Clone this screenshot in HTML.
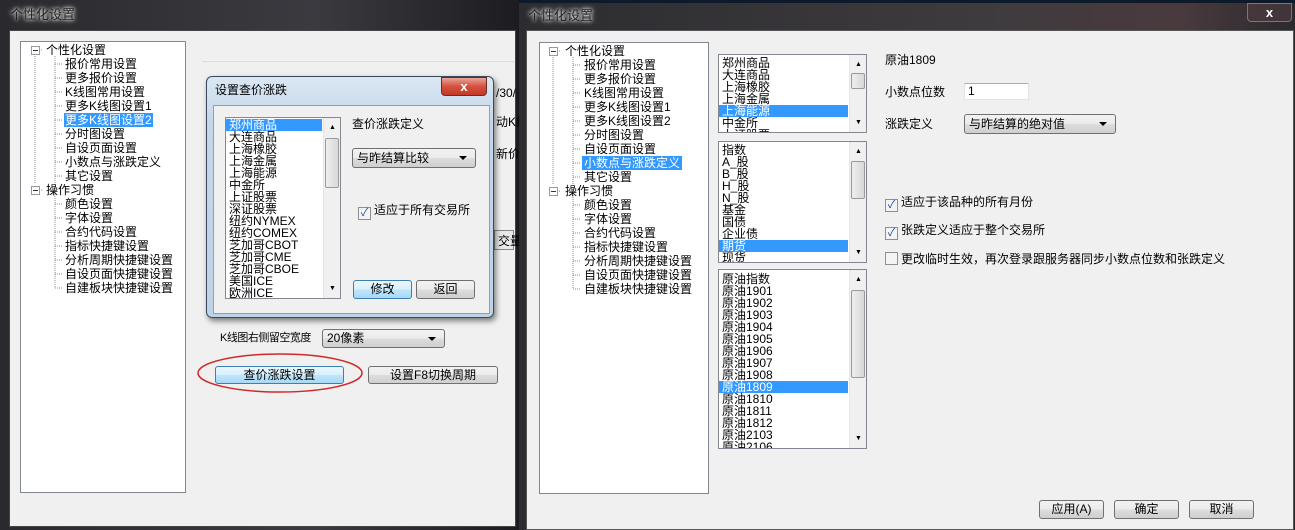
<!DOCTYPE html>
<html><head><meta charset="utf-8"><style>
*{margin:0;padding:0;box-sizing:border-box}
body{width:1295px;height:530px;overflow:hidden;background:#1a1a1c;font-family:"Liberation Sans","Noto Sans CJK SC","WenQuanYi Zen Hei",sans-serif;font-size:12px;color:#000;position:relative}
.a{position:absolute}
.t{position:absolute;white-space:nowrap;line-height:14px}
.box{position:absolute;background:#fff;border:1px solid #828790}
.btn{position:absolute;border:1px solid #707070;border-radius:3px;background:linear-gradient(#f2f2f2,#ebebeb 50%,#dddddd 51%,#cfcfcf);text-align:center;font-size:12px}
.combo{position:absolute;border:1px solid #707070;border-radius:3px;background:linear-gradient(#f2f2f2,#ebebeb 50%,#dddddd 51%,#cfcfcf);font-size:12px;padding-left:4px}
.combo:after{content:"";position:absolute;right:8px;top:50%;margin-top:-2px;border-left:4px solid transparent;border-right:4px solid transparent;border-top:4px solid #000}
.sb{position:absolute;top:0;right:0;bottom:0;width:17px;background:#f0f0f0;border-left:1px solid #e6e6e6}
.thumb{position:absolute;left:1px;right:1px;border:1px solid #9a9a9a;border-radius:2px;background:linear-gradient(90deg,#eee,#d8d8d8)}
.sel{background:#3399ff;color:#fff}
.li{height:12px;line-height:12px;padding-left:3px;white-space:nowrap;font-size:12px}
.cb{display:inline-block;width:13px;height:13px;border:1px solid #8e8f8f;background:#f4f4f4;vertical-align:-2px;margin-right:3px;position:relative;color:#2a4e9a;font-size:11px;line-height:11px;text-align:center}
</style></head><body>
<!-- left window -->
<div class="a" style="left:0;top:0;width:522px;height:530px;background:linear-gradient(90deg,#2a2a2e,#3a3a40 60%,#1c1c20)"></div>
<div class="t" style="left:10px;top:8px;font-size:13px;color:#222;text-shadow:0 0 6px #fff,0 0 3px #fff">个性化设置</div>
<div class="a" style="left:9px;top:30px;width:507px;height:497px;background:#f0f0f0;border:1px solid #444"></div>
<div class="box" style="left:20px;top:41px;width:166px;height:452px"></div>
<svg class="a" style="left:28px;top:44px" width="60" height="250">
<g stroke="#888" stroke-dasharray="1 1" fill="none">
<path d="M7 12V140M7 6H14M7 146H14M27 12V244"/>
<path d="M27 20H34M27 34H34M27 48H34M27 62H34M27 76H34M27 90H34M27 104H34M27 118H34M27 132H34M27 160H34M27 174H34M27 188H34M27 202H34M27 216H34M27 230H34M27 244H34"/>
</g>
<rect x="3.5" y="2.5" width="8" height="8" fill="#fff" stroke="#999"/><path d="M5 6.5H10" stroke="#333"/>
<rect x="3.5" y="142.5" width="8" height="8" fill="#fff" stroke="#999"/><path d="M5 146.5H10" stroke="#333"/>
</svg>
<div class="t" style="left:46px;top:43px">个性化设置</div>
<div class="t" style="left:65px;top:57px">报价常用设置</div>
<div class="t" style="left:65px;top:71px">更多报价设置</div>
<div class="t" style="left:65px;top:85px">K线图常用设置</div>
<div class="t" style="left:65px;top:99px">更多K线图设置1</div>
<div class="t sel" style="left:64px;top:113px;padding:0 1px">更多K线图设置2</div>
<div class="t" style="left:65px;top:127px">分时图设置</div>
<div class="t" style="left:65px;top:141px">自设页面设置</div>
<div class="t" style="left:65px;top:155px">小数点与涨跌定义</div>
<div class="t" style="left:65px;top:169px">其它设置</div>
<div class="t" style="left:46px;top:183px">操作习惯</div>
<div class="t" style="left:65px;top:197px">颜色设置</div>
<div class="t" style="left:65px;top:211px">字体设置</div>
<div class="t" style="left:65px;top:225px">合约代码设置</div>
<div class="t" style="left:65px;top:239px">指标快捷键设置</div>
<div class="t" style="left:65px;top:253px">分析周期快捷键设置</div>
<div class="t" style="left:65px;top:267px">自设页面快捷键设置</div>
<div class="t" style="left:65px;top:281px">自建板块快捷键设置</div>
<div class="a" style="left:202px;top:61px;width:312px;height:1px;background:#d5dfe5"></div>
<div class="t" style="left:496px;top:86px">/30/</div>
<div class="t" style="left:496px;top:115px">动K线</div>
<div class="t" style="left:496px;top:147px">新价</div>
<div class="a" style="left:494px;top:230px;width:20px;height:20px;border:1px solid #888;background:#e8e8e8"></div>
<div class="t" style="left:498px;top:234px">交量</div>
<div class="t" style="left:220px;top:331px;font-size:11px;letter-spacing:-0.5px">K线图右侧留空宽度</div>
<div class="combo" style="left:322px;top:329px;width:123px;height:19px;line-height:17px">20像素</div>
<svg class="a" style="left:195px;top:352px" width="170" height="42"><ellipse cx="85" cy="21" rx="82" ry="19" fill="none" stroke="#d02828" stroke-width="1.5"/></svg>
<div class="btn" style="left:215px;top:366px;width:129px;height:18px;line-height:16px;border-color:#3c7fb1;background:linear-gradient(#eaf6fd,#d9f0fc 50%,#bee6fd 51%,#a7d9f5)">查价涨跌设置</div>
<div class="btn" style="left:368px;top:366px;width:130px;height:18px;line-height:16px">设置F8切换周期</div>
<!-- dialog -->
<div class="a" style="left:206px;top:76px;width:288px;height:242px;border:1px solid #3a4a5a;border-radius:6px;background:linear-gradient(#dbe7f3,#c3d6ea 20%,#bfd3e8);box-shadow:2px 3px 6px rgba(0,0,0,.5)"></div>
<div class="t" style="left:215px;top:83px;font-size:12px">设置查价涨跌</div>
<div class="a" style="left:441px;top:77px;width:46px;height:19px;border:1px solid #6d2a25;border-radius:0 0 4px 4px;background:linear-gradient(#e8a597,#d4503e 50%,#c23a26);color:#fff;font-weight:bold;text-align:center;line-height:17px;font-size:13px">x</div>
<div class="a" style="left:213px;top:105px;width:277px;height:209px;background:#f0f0f0;border:1px solid #8ea0b4"></div>
<div class="box" style="left:225px;top:117px;width:116px;height:182px;overflow:hidden">
<div style="padding-top:1px">
<div class="li sel" style="width:96px">郑州商品</div><div class="li">大连商品</div><div class="li">上海橡胶</div><div class="li">上海金属</div><div class="li">上海能源</div><div class="li">中金所</div><div class="li">上证股票</div><div class="li">深证股票</div><div class="li">纽约NYMEX</div><div class="li">纽约COMEX</div><div class="li">芝加哥CBOT</div><div class="li">芝加哥CME</div><div class="li">芝加哥CBOE</div><div class="li">美国ICE</div><div class="li">欧洲ICE</div>
</div>
<div class="sb"><div class="t" style="left:5px;top:3px;font-size:7px">▲</div><div class="thumb" style="top:20px;height:50px"></div><div class="t" style="left:5px;bottom:2px;top:auto;font-size:7px">▼</div></div>
</div>
<div class="t" style="left:352px;top:117px">查价涨跌定义</div>
<div class="combo" style="left:352px;top:148px;width:124px;height:20px;line-height:18px">与昨结算比较</div>
<div class="t" style="left:358px;top:203px"><span class="cb">✓</span>适应于所有交易所</div>
<div class="btn" style="left:353px;top:280px;width:59px;height:19px;line-height:17px;border-color:#3c7fb1;background:linear-gradient(#eaf6fd,#d9f0fc 50%,#bee6fd 51%,#a7d9f5)">修改</div>
<div class="btn" style="left:416px;top:280px;width:59px;height:19px;line-height:17px">返回</div>

<!-- right window -->
<div class="a" style="left:519px;top:0;width:776px;height:530px;background:linear-gradient(90deg,#2c2c30,#3e3b3e 60%,#4a3a3e 85%,#2a2a2e)"></div>
<div class="a" style="left:519px;top:0;width:776px;height:3px;background:#0d1a2c"></div>
<div class="t" style="left:528px;top:9px;font-size:13px;color:#222;text-shadow:0 0 6px #fff,0 0 3px #fff">个性化设置</div>
<div class="a" style="left:1247px;top:3px;width:45px;height:19px;border:1px solid #777;border-radius:0 0 4px 4px;background:rgba(80,60,65,.6);color:#fff;font-weight:bold;text-align:center;line-height:17px;font-size:13px">x</div>
<div class="a" style="left:526px;top:30px;width:768px;height:500px;background:#f0f0f0;border:1px solid #555"></div>
<div class="box" style="left:539px;top:42px;width:170px;height:452px"></div>
<svg class="a" style="left:546px;top:45px" width="60" height="250">
<g stroke="#888" stroke-dasharray="1 1" fill="none">
<path d="M7 12V140M7 6H14M7 146H14M27 12V244"/>
<path d="M27 20H34M27 34H34M27 48H34M27 62H34M27 76H34M27 90H34M27 104H34M27 118H34M27 132H34M27 160H34M27 174H34M27 188H34M27 202H34M27 216H34M27 230H34M27 244H34"/>
</g>
<rect x="3.5" y="2.5" width="8" height="8" fill="#fff" stroke="#999"/><path d="M5 6.5H10" stroke="#333"/>
<rect x="3.5" y="142.5" width="8" height="8" fill="#fff" stroke="#999"/><path d="M5 146.5H10" stroke="#333"/>
</svg>
<div class="t" style="left:565px;top:44px">个性化设置</div>
<div class="t" style="left:584px;top:58px">报价常用设置</div>
<div class="t" style="left:584px;top:72px">更多报价设置</div>
<div class="t" style="left:584px;top:86px">K线图常用设置</div>
<div class="t" style="left:584px;top:100px">更多K线图设置1</div>
<div class="t" style="left:584px;top:114px">更多K线图设置2</div>
<div class="t" style="left:584px;top:128px">分时图设置</div>
<div class="t" style="left:584px;top:142px">自设页面设置</div>
<div class="t sel" style="left:582px;top:156px;padding:0 2px">小数点与涨跌定义</div>
<div class="t" style="left:584px;top:170px">其它设置</div>
<div class="t" style="left:565px;top:184px">操作习惯</div>
<div class="t" style="left:584px;top:198px">颜色设置</div>
<div class="t" style="left:584px;top:212px">字体设置</div>
<div class="t" style="left:584px;top:226px">合约代码设置</div>
<div class="t" style="left:584px;top:240px">指标快捷键设置</div>
<div class="t" style="left:584px;top:254px">分析周期快捷键设置</div>
<div class="t" style="left:584px;top:268px">自设页面快捷键设置</div>
<div class="t" style="left:584px;top:282px">自建板块快捷键设置</div>

<div class="box" style="left:718px;top:54px;width:149px;height:79px;overflow:hidden">
<div style="padding-top:2px"><div class="li">郑州商品</div><div class="li">大连商品</div><div class="li">上海橡胶</div><div class="li">上海金属</div><div class="li sel" style="width:129px">上海能源</div><div class="li">中金所</div><div class="li">上证股票</div></div>
<div class="sb"><div class="t" style="left:5px;top:3px;font-size:7px">▲</div><div class="thumb" style="top:18px;height:16px"></div><div class="t" style="left:5px;bottom:2px;top:auto;font-size:7px">▼</div></div>
</div>
<div class="box" style="left:718px;top:141px;width:149px;height:122px;overflow:hidden">
<div style="padding-top:2px"><div class="li">指数</div><div class="li">A_股</div><div class="li">B_股</div><div class="li">H_股</div><div class="li">N_股</div><div class="li">基金</div><div class="li">国债</div><div class="li">企业债</div><div class="li sel" style="width:129px">期货</div><div class="li">现货</div></div>
<div class="sb"><div class="t" style="left:5px;top:3px;font-size:7px">▲</div><div class="thumb" style="top:19px;height:38px"></div><div class="t" style="left:5px;bottom:2px;top:auto;font-size:7px">▼</div></div>
</div>
<div class="box" style="left:718px;top:269px;width:149px;height:180px;overflow:hidden">
<div style="padding-top:3px"><div class="li">原油指数</div><div class="li">原油1901</div><div class="li">原油1902</div><div class="li">原油1903</div><div class="li">原油1904</div><div class="li">原油1905</div><div class="li">原油1906</div><div class="li">原油1907</div><div class="li">原油1908</div><div class="li sel" style="width:129px">原油1809</div><div class="li">原油1810</div><div class="li">原油1811</div><div class="li">原油1812</div><div class="li">原油2103</div><div class="li">原油2106</div></div>
<div class="sb"><div class="t" style="left:5px;top:3px;font-size:7px">▲</div><div class="thumb" style="top:20px;height:88px"></div><div class="t" style="left:5px;bottom:2px;top:auto;font-size:7px">▼</div></div>
</div>

<div class="t" style="left:885px;top:53px">原油1809</div>
<div class="t" style="left:885px;top:85px">小数点位数</div>
<div class="a" style="left:964px;top:83px;width:65px;height:17px;background:#fff;border:1px solid #e3e3e3;border-top-color:#abadb3;padding-left:3px;line-height:15px">1</div>
<div class="t" style="left:885px;top:117px">涨跌定义</div>
<div class="combo" style="left:964px;top:114px;width:152px;height:20px;line-height:18px">与昨结算的绝对值</div>
<div class="t" style="left:885px;top:195px"><span class="cb">✓</span>适应于该品种的所有月份</div>
<div class="t" style="left:885px;top:223px"><span class="cb">✓</span>张跌定义适应于整个交易所</div>
<div class="t" style="left:885px;top:252px"><span class="cb"></span>更改临时生效，再次登录跟服务器同步小数点位数和张跌定义</div>
<div class="btn" style="left:1039px;top:500px;width:65px;height:19px;line-height:17px">应用(A)</div>
<div class="btn" style="left:1114px;top:500px;width:65px;height:19px;line-height:17px">确定</div>
<div class="btn" style="left:1189px;top:500px;width:65px;height:19px;line-height:17px">取消</div>
</body></html>
